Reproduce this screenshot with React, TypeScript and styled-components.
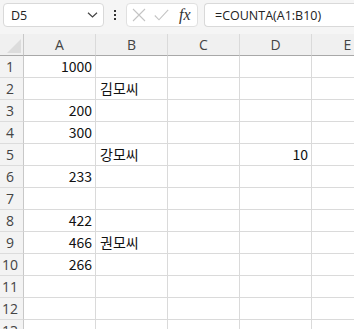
import styled, { createGlobalStyle } from 'styled-components';

const GlobalStyle = createGlobalStyle`
  html, body {
    margin: 0;
    padding: 0;
    background: #ffffff;
    overflow: hidden;
  }
`;

const columns = ['A', 'B', 'C', 'D', 'E'];

// each row: values for A..E, number means right aligned
const rows: (string | number | null)[][] = [
  [1000, null, null, null, null],
  [null, '김모씨', null, null, null],
  [200, null, null, null, null],
  [300, null, null, null, null],
  [null, '강모씨', null, 10, null],
  [233, null, null, null, null],
  [null, null, null, null, null],
  [422, null, null, null, null],
  [466, '권모씨', null, null, null],
  [266, null, null, null, null],
  [null, null, null, null, null],
  [null, null, null, null, null],
  [null, null, null, null, null],
];

const Chevron = () => (
  <svg width="11" height="6" viewBox="0 0 11 6" fill="none">
    <path d="M1 0.8 L5.5 5 L10 0.8" stroke="#444" strokeWidth="1.2" />
  </svg>
);

const CancelIcon = () => (
  <svg width="14" height="14" viewBox="0 0 14 14" fill="none">
    <path d="M1 1 L13 13 M13 1 L1 13" stroke="#c4c4c4" strokeWidth="1.1" />
  </svg>
);

const EnterIcon = () => (
  <svg width="15" height="12" viewBox="0 0 15 12" fill="none">
    <path d="M0.8 6.5 L5 10.8 L14.2 0.8" stroke="#c4c4c4" strokeWidth="1.1" />
  </svg>
);

const App = () => {
  return (
    <>
      <GlobalStyle />
      <Page>
        <Toolbar>
          <NameBox>
            <span>D5</span>
            <Chevron />
          </NameBox>
          <Dots>
            <i />
            <i />
            <i />
          </Dots>
          <EditBox>
            <CancelIcon />
            <EnterIcon />
            <Fx>fx</Fx>
          </EditBox>
          <FormulaBox>=COUNTA(A1:B10)</FormulaBox>
        </Toolbar>
        <Sheet>
          <Corner>
            <SelectAll />
          </Corner>
          {columns.map((c) => (
            <ColHeader key={c}>{c}</ColHeader>
          ))}
          {rows.map((row, r) => (
            <Row key={r}>
              <RowHeader>{r + 1}</RowHeader>
              {row.map((v, c) => (
                <Cell key={c} $num={typeof v === 'number'}>
                  {v}
                </Cell>
              ))}
            </Row>
          ))}
        </Sheet>
      </Page>
    </>
  );
};

const Page = styled.div`
  width: 354px;
  height: 329px;
  overflow: hidden;
  background: #ffffff;
`;

const Toolbar = styled.div`
  height: 34px;
  box-sizing: border-box;
  padding: 3px 0 0 3px;
  display: flex;
  align-items: flex-start;
  background: #f5f5f5;
`;

const NameBox = styled.div`
  width: 101px;
  height: 24px;
  box-sizing: border-box;
  border: 1px solid #d9d9d9;
  border-radius: 4px;
  background: #fff;
  display: flex;
  align-items: center;
  justify-content: space-between;
  padding: 0 5px 0 7px;
  font-family: 'Open Sans', 'Liberation Sans', sans-serif;
  font-size: 12.5px;
  color: #222;
`;

const Dots = styled.div`
  width: 22px;
  height: 24px;
  display: flex;
  flex-direction: column;
  align-items: center;
  justify-content: center;
  gap: 2px;

  i {
    width: 2px;
    height: 2px;
    background: #333;
  }
`;

const EditBox = styled.div`
  width: 72px;
  height: 24px;
  box-sizing: border-box;
  border: 1px solid #e0e0e0;
  border-radius: 4px;
  background: #fff;
  display: flex;
  align-items: center;
  gap: 8px;
  padding-left: 5px;
`;

const Fx = styled.span`
  font-family: 'Liberation Serif', serif;
  font-style: italic;
  font-size: 16px;
  color: #333;
  margin-left: 2px;
`;

const FormulaBox = styled.div`
  margin-left: 6px;
  flex: 1;
  height: 24px;
  box-sizing: border-box;
  border: 1px solid #d9d9d9;
  border-right: none;
  border-radius: 4px 0 0 4px;
  background: #fff;
  padding-left: 10px;
  display: flex;
  align-items: center;
  font-family: 'Open Sans', 'Liberation Sans', sans-serif;
  font-size: 12.5px;
  color: #222;
`;

const Sheet = styled.div`
  display: grid;
  grid-template-columns: 24px repeat(5, 72px);
  grid-auto-rows: 22px;
`;

const Row = styled.div`
  display: contents;
`;

const Corner = styled.div`
  background: #f0f0f0;
  border-right: 1px solid #c8c8c8;
  border-bottom: 1px solid #a8a8a8;
  position: relative;
`;

const SelectAll = styled.div`
  position: absolute;
  right: 2px;
  bottom: 2px;
  width: 0;
  height: 0;
  border-left: 14px solid transparent;
  border-bottom: 14px solid #dcdcdc;
`;

const ColHeader = styled.div`
  background: #f0f0f0;
  border-right: 1px solid #dadada;
  border-bottom: 1px solid #a8a8a8;
  display: flex;
  align-items: center;
  justify-content: center;
  font-family: 'Open Sans', 'Liberation Sans', sans-serif;
  font-size: 14px;
  color: #444;
`;

const RowHeader = styled.div`
  background: #f3f3f3;
  border-right: 1px solid #c8c8c8;
  border-bottom: 1px solid #dcdcdc;
  display: flex;
  align-items: center;
  justify-content: center;
  padding-right: 3px;
  font-family: 'Open Sans', 'Liberation Sans', sans-serif;
  font-size: 14px;
  color: #444;
`;

const Cell = styled.div<{ $num: boolean }>`
  border-right: 1px solid #dadada;
  border-bottom: 1px solid #dadada;
  display: flex;
  align-items: flex-end;
  justify-content: ${(p) => (p.$num ? 'flex-end' : 'flex-start')};
  padding: 0 3px 1px 4px;
  font-family: 'Noto Sans CJK KR', 'Noto Sans', sans-serif;
  font-size: 14px;
  line-height: 20px;
  color: #111;
  white-space: nowrap;
`;

export default App;
